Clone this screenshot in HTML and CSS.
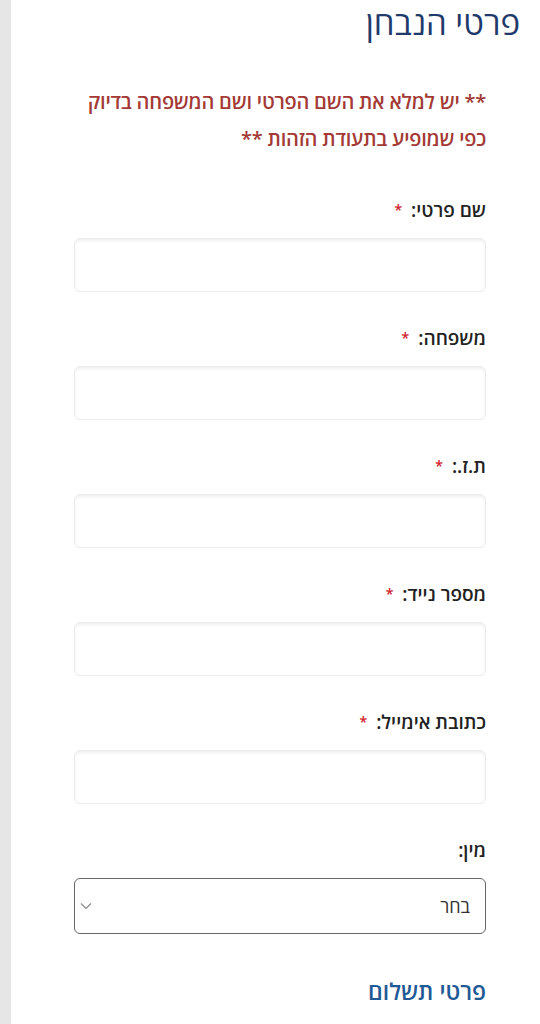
FILE: index.html
```html
<!DOCTYPE html>
<html lang="he" dir="rtl">
<head>
    <meta charset="UTF-8">
    <meta name="viewport" content="width=device-width, initial-scale=1.0">
    <title>פרטי הנבחן</title>
    <link rel="stylesheet" href="styles.css">
</head>
<body>
    <div class="page">
        <h2 class="section-title">פרטי הנבחן</h2>
        <p class="notice">** יש למלא את השם הפרטי ושם המשפחה בדיוק<br>כפי שמופיע בתעודת הזהות **</p>

        <form class="examinee-form">
            <div class="form-group">
                <label for="first-name">שם פרטי: <span class="req">*</span></label>
                <input type="text" id="first-name" name="first-name">
            </div>
            <div class="form-group">
                <label for="last-name">משפחה: <span class="req">*</span></label>
                <input type="text" id="last-name" name="last-name">
            </div>
            <div class="form-group">
                <label for="id-number">ת.ז.: <span class="req">*</span></label>
                <input type="text" id="id-number" name="id-number">
            </div>
            <div class="form-group">
                <label for="mobile">מספר נייד: <span class="req">*</span></label>
                <input type="tel" id="mobile" name="mobile">
            </div>
            <div class="form-group">
                <label for="email">כתובת אימייל: <span class="req">*</span></label>
                <input type="email" id="email" name="email">
            </div>
            <div class="form-group">
                <label for="gender">מין:</label>
                <div class="select-wrap">
                    <select id="gender" name="gender">
                        <option value="">בחר</option>
                        <option value="m">זכר</option>
                        <option value="f">נקבה</option>
                    </select>
                    <svg class="chevron" width="12" height="8" viewBox="0 0 12 8"><path d="M1 1.5l5 5 5-5" fill="none" stroke="#888" stroke-width="1.2"/></svg>
                </div>
            </div>
        </form>

        <h3 class="sub-title">פרטי תשלום</h3>
    </div>
</body>
</html>
```

FILE: styles.css
```css
body {
    margin: 0;
    font-family: "Open Sans", "DejaVu Sans", sans-serif;
    background-color: #fff;
}
.page {
    min-height: 1024px;
    border-left: 11px solid #e6e6e6;
    padding: 0 54px 0 63px;
    box-sizing: border-box;
}
.section-title {
    margin: 0 -34px 0 0;
    font-size: 33px;
    font-weight: 400;
    line-height: 45px;
    color: #1f3a6b;
}
.notice {
    margin: 38px 0 0;
    font-size: 20px;
    font-weight: 600;
    letter-spacing: -0.2px;
    white-space: nowrap;
    line-height: 37px;
    color: #a33a36;
}
.examinee-form {
    margin-top: 41px;
    display: grid;
    row-gap: 34px;
}
.form-group label {
    display: block;
    font-size: 19px;
    font-weight: 600;
    line-height: 24px;
    color: #222;
    margin-bottom: 16px;
}
.req {
    color: #d0202a;
    font-size: 14px;
    vertical-align: top;
    margin-right: 4px;
}
.form-group input {
    display: block;
    width: 100%;
    height: 54px;
    box-sizing: border-box;
    border: 1px solid #ececec;
    border-radius: 6px;
    box-shadow: inset 0 2px 3px rgba(0, 0, 0, 0.06);
    background-color: #fff;
}
.select-wrap {
    position: relative;
}
.select-wrap select {
    display: block;
    width: 100%;
    height: 56px;
    box-sizing: border-box;
    border: 1.5px solid #666;
    border-radius: 6px;
    padding: 0 15px 0 40px;
    appearance: none;
    background-color: #fff;
    font-family: inherit;
    font-size: 18px;
    color: #333;
}
.chevron {
    position: absolute;
    left: 6px;
    top: 24px;
}
.sub-title {
    margin: 42px 0 0;
    font-size: 23px;
    font-weight: 600;
    line-height: 30px;
    color: #1f5a96;
}
```
